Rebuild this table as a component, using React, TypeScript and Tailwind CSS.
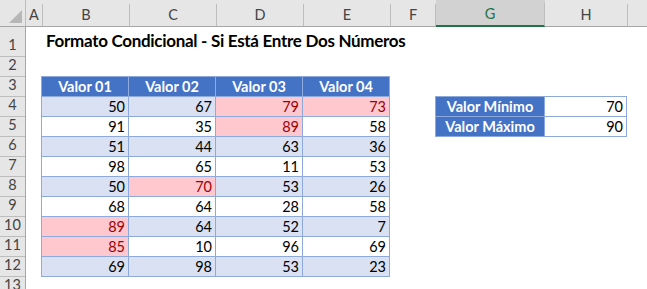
const cols = ['A', 'B', 'C', 'D', 'E', 'F', 'G', 'H', ''];

type Cell = { v: number; hit?: boolean };

const rows: Cell[][] = [
  [{ v: 50 }, { v: 67 }, { v: 79, hit: true }, { v: 73, hit: true }],
  [{ v: 91 }, { v: 35 }, { v: 89, hit: true }, { v: 58 }],
  [{ v: 51 }, { v: 44 }, { v: 63 }, { v: 36 }],
  [{ v: 98 }, { v: 65 }, { v: 11 }, { v: 53 }],
  [{ v: 50 }, { v: 70, hit: true }, { v: 53 }, { v: 26 }],
  [{ v: 68 }, { v: 64 }, { v: 28 }, { v: 58 }],
  [{ v: 89, hit: true }, { v: 64 }, { v: 52 }, { v: 7 }],
  [{ v: 85, hit: true }, { v: 10 }, { v: 96 }, { v: 69 }],
  [{ v: 69 }, { v: 98 }, { v: 53 }, { v: 23 }],
];

const heads = ['Valor 01', 'Valor 02', 'Valor 03', 'Valor 04'];

const rowHeights = ['h-[30px]', ...Array(12).fill('h-[20px]')];

const App = () => {
  return (
    <div
      className="flex h-[289px] w-[647px] flex-col overflow-hidden bg-white text-[14.5px] text-black"
      style={{ fontFamily: 'Lato, "Noto Sans", sans-serif' }}
    >
      {/* column headers */}
      <div className="flex h-[27px] shrink-0 border-b border-[#a6a6a6] bg-[#e6e6e6]">
        <div className="relative w-[26px] shrink-0 border-r border-[#bdbdbd]">
          <div className="absolute bottom-[3px] right-[3px] h-0 w-0 border-b-[13px] border-l-[13px] border-b-[#b7b7b7] border-l-transparent" />
        </div>
        {cols.map((c, i) => {
          const widths = ['w-[17px]', 'w-[87px]', 'w-[87px]', 'w-[87px]', 'w-[87px]', 'w-[45px]', 'w-[109px]', 'w-[83px]', 'flex-1'];
          const sel = c === 'G';
          return (
            <div
              key={i}
              className={`${widths[i]} shrink-0 ${sel ? 'bg-[#d2d2d2] text-[#217346]' : 'text-[#444]'} relative flex flex-col`}
            >
              <div className="h-[8px]" />
              <div
                className={`flex flex-1 items-center justify-center ${c !== '' ? 'border-r border-[#bdbdbd]' : ''} ${sel ? 'border-b-2 border-b-[#217346] -mb-px' : ''}`}
              >
                {c}
              </div>
            </div>
          );
        })}
      </div>

      <div className="flex flex-1">
        {/* row headers */}
        <div className="flex w-[26px] shrink-0 flex-col border-r border-[#a6a6a6] bg-[#e6e6e6] text-[#444]">
          {rowHeights.map((h, i) => (
            <div key={i} className={`${h} flex shrink-0 items-end justify-center border-b border-[#bdbdbd]`}>
              {i + 1}
            </div>
          ))}
        </div>

        {/* sheet */}
        <div className="grid flex-1 grid-cols-[16px_87px_87px_87px_87px_45px_109px_83px_1fr] grid-rows-[30px_20px_repeat(10,20px)_1fr]">
          <div className="col-start-2 col-span-6 row-start-1 flex items-end whitespace-nowrap pb-[4px] pl-[4px] text-[17px] font-bold tracking-[-0.3px]">
            Formato Condicional - Si Está Entre Dos Números
          </div>

          {/* main table */}
          <div className="col-start-2 col-span-4 row-start-3 row-span-10 -ml-px -mt-px grid grid-cols-[repeat(4,1fr)] border-l border-t border-[#8ea9db]">
            {heads.map((h) => (
              <div
                key={h}
                className="flex h-[20px] items-center justify-center border-b border-r border-[#8ea9db] bg-[#4472c4] font-bold text-white"
              >
                {h}
              </div>
            ))}
            {rows.map((r, ri) =>
              r.map((c, ci) => (
                <div
                  key={`${ri}-${ci}`}
                  className={`flex h-[20px] items-center justify-end border-b border-r border-[#8ea9db] pr-[3px] ${
                    c.hit ? 'bg-[#ffc7ce] text-[#9c0006]' : ri % 2 === 0 ? 'bg-[#d9e1f2]' : 'bg-white'
                  }`}
                >
                  {c.v}
                </div>
              ))
            )}
          </div>

          {/* limits table */}
          <div className="col-start-7 col-span-2 row-start-4 row-span-2 -mt-px grid grid-cols-[109px_1fr] border-t border-l border-[#8ea9db]">
            {[
              ['Valor Mínimo', 70],
              ['Valor Máximo', 90],
            ].map(([label, v]) => (
              <div key={label} className="contents">
                <div className="flex h-[20px] items-center justify-center border-b border-r border-[#8ea9db] bg-[#4472c4] font-bold text-white">
                  {label}
                </div>
                <div className="flex h-[20px] items-center justify-end border-b border-r border-[#8ea9db] bg-white pr-[3px]">
                  {v}
                </div>
              </div>
            ))}
          </div>
        </div>
      </div>
    </div>
  );
};

export default App;
